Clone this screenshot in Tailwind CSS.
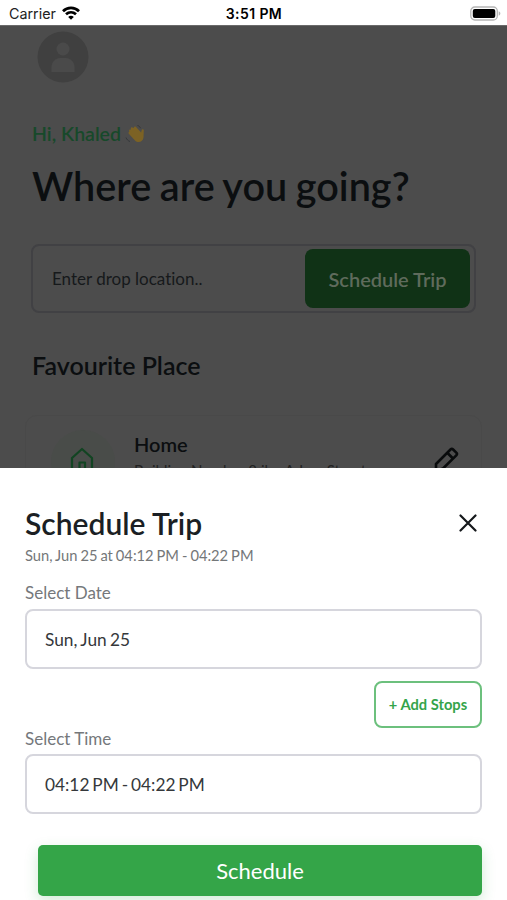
<!DOCTYPE html>
<html lang="en">
<head>
  <meta charset="UTF-8" />
  <meta name="viewport" content="width=device-width, initial-scale=1.0"/>
  <title>Schedule Trip</title>
  <script src="https://cdn.jsdelivr.net/npm/@tailwindcss/browser@4"></script>
</head>
<body class="w-[507px] h-[900px] overflow-hidden flex flex-col bg-white font-[Lato,sans-serif] text-[#1b1f24] [font-variant-ligatures:none]">

  <!-- Status bar -->
  <header class="h-[25px] shrink-0 grid grid-cols-3 items-center pl-[9px] pr-[6px] pt-[3px] font-[Inter,sans-serif] leading-[22px] text-black">
    <div class="flex items-center gap-[6px]">
      <span class="text-[14.3px] text-[#222]">Carrier</span>
      <svg class="w-[18px] h-[14px] -mt-[2px]" viewBox="0 0 18 14" fill="none" stroke="#000" stroke-width="2.7">
        <path d="M1 5.2C5.5 .7 12.500 .7 17 5.200"/>
        <path d="M4 8.300c2.900-2.700 7.100-2.700 10 0"/>
        <path d="M9 13.700 6.200 10.900c1.600-1.400 4-1.400 5.600 0z" fill="#000" stroke="none"/>
      </svg>
    </div>
    <span class="text-center font-semibold text-[14px] tracking-[.4px] -ml-[2px]">3:51 PM</span>
    <svg class="w-[31px] h-[15px] justify-self-end -mt-[2px]" viewBox="0 0 31 15">
      <rect x=".8" y="1" width="26.500" height="13" rx="4" fill="#fff" stroke="#b5b5b5" stroke-width="1.300"/>
      <rect x="2.800" y="3" width="22.500" height="9" rx="2" fill="#000"/>
      <path d="M28.700 5.300c2.200.8 2.200 3.600 0 4.400z" fill="#b5b5b5"/>
    </svg>
  </header>

  <!-- Home screen, dimmed -->
  <main class="h-[443px] shrink-0 overflow-hidden bg-[#4c4c4c] border-t border-[#6a6a6a] px-[31px] text-[#0b0e10]">
    <svg class="w-[52px] h-[52px] ml-[6px] mt-[5px]" viewBox="0 0 52 52">
      <circle cx="26" cy="26" r="25.500" fill="#404040"/>
      <circle cx="26" cy="18" r="6.500" fill="#4a4a4a"/>
      <path d="M14.500 41v-5c0-5 4-9 9-9h5c5 0 9 4 9 9v5z" fill="#4a4a4a"/>
    </svg>

    <div class="mt-[39px] h-6 pl-px flex items-center gap-1 text-[19.500px] font-semibold text-[#17492a]">
      <span>Hi, Khaled</span>
      <svg class="w-5 h-5" viewBox="0 0 20 20">
        <path d="M4 10 10 16.500c3 3 8 1.500 8.500-3l.3-7c0-1.500-2-1.600-2.200 0l-.5 2L10.800 2.800c-1-1-2.400 0-1.700 1.200L7.300 3.500c-1-.6-2 .5-1.300 1.500l-.6.700c-1-.5-1.800.5-1.100 1.400l-.2.900c-.8.300-.8 1.300-.1 2z" fill="#7c6224"/>
        <path d="M12.500 1.500c1.500.3 2.500 1.300 3 2.700M1 13.500c.8 2 2 3.300 4 4" fill="none" stroke="#34373a" stroke-width="1"/>
      </svg>
    </div>

    <h1 class="mt-[15px] pl-px text-[39.600px] leading-[50px] font-semibold [word-spacing:-1.200px] whitespace-nowrap">Where are you going?</h1>

    <div class="mt-[33px] h-[69px] flex items-center justify-between border-2 border-[#414144] rounded-lg pl-[19px] pr-1">
      <span class="text-[17px] text-[#16191b]">Enter drop location..</span>
      <button class="w-[165px] h-[59px] rounded-lg bg-[#103216] text-[#5f6b5c] text-[20px] font-semibold">Schedule Trip</button>
    </div>

    <h2 class="mt-[37px] pl-px text-[25px] leading-[30px] font-semibold">Favourite Place</h2>

    <div class="mt-[35px] -mx-[6px] h-[120px] flex rounded-xl border border-[#494949] px-[25px] pt-[14px]">
      <div class="w-[64px] h-[64px] rounded-full bg-[#494c49] flex justify-center pt-[17px]">
        <svg class="w-6 h-7 -ml-[2px]" viewBox="0 0 24 28" fill="none" stroke="#124422" stroke-width="2.200" stroke-linejoin="round" stroke-linecap="round">
          <path d="M2 26V11L12 2l10 9v15z"/>
          <path d="M9.500 26V15.500h5.500v10.500"/>
        </svg>
      </div>
      <div class="ml-[19px] flex-1">
        <p class="text-[20px] leading-[28px] font-semibold">Home</p>
        <p class="mt-px text-[15px] leading-[22px] text-[#222]">Building Number 8 ibn Adam Street</p>
      </div>
      <svg class="w-7 h-7 mt-[16px] -mr-[4px]" viewBox="0 0 28 28" fill="none" stroke="#090b0c" stroke-width="2.600" stroke-linejoin="round">
        <path d="M4 25v-7L18.500 3.500c.8-.8 1.800-.8 2.600 0l3.200 3.200c.8.800.8 1.800 0 2.600L11 22.500 4 25z"/>
        <path d="m15.500 7 5.500 5.500"/>
      </svg>
    </div>
  </main>

  <!-- Bottom sheet -->
  <section class="flex-1 bg-white px-[25px] pt-[36px]">
    <div class="flex items-center justify-between">
      <h2 class="text-[30px] leading-[38px] font-semibold">Schedule Trip</h2>
      <svg class="w-[18px] h-[18px] mr-[5px]" viewBox="0 0 18 18" fill="none" stroke="#15181b" stroke-width="2.200" stroke-linecap="round">
        <path d="m1.500 1.500 15 15M16.500 1.500l-15 15"/>
      </svg>
    </div>
    <p class="mt-[2px] text-[14.700px] leading-[22px] [word-spacing:-.800px] text-[#747779]">Sun, Jun 25 at 04:12 PM - 04:22 PM</p>

    <label class="block mt-[15px] text-[17px] leading-[24px] text-[#75787b]">Select Date</label>
    <div class="mt-1 h-[60px] flex items-center border-2 border-[#d6d6dd] rounded-lg pl-[18px] pt-px text-[17.300px] [word-spacing:-1px] text-[#35383b]">Sun, Jun 25</div>

    <div class="mt-3 flex justify-end">
      <button class="w-[108px] h-[47px] border-2 border-[#6cc07d] rounded-lg text-[14.700px] font-bold text-[#34a44a]">+ Add Stops</button>
    </div>

    <label class="block text-[17px] leading-[22px] text-[#75787b]">Select Time</label>
    <div class="mt-[4px] h-[60px] flex items-center border-2 border-[#d6d6dd] rounded-lg pl-[18px] pt-px text-[17.300px] [word-spacing:-1.500px] text-[#35383b]">04:12 PM - 04:22 PM</div>

    <button class="block ml-[13px] mt-[31px] w-[444px] h-[51px] rounded-[5px] bg-[#34a548] text-white text-[22px] shadow-[0_5px_14px_#34a54838]">Schedule</button>
  </section>
</body>
</html>
